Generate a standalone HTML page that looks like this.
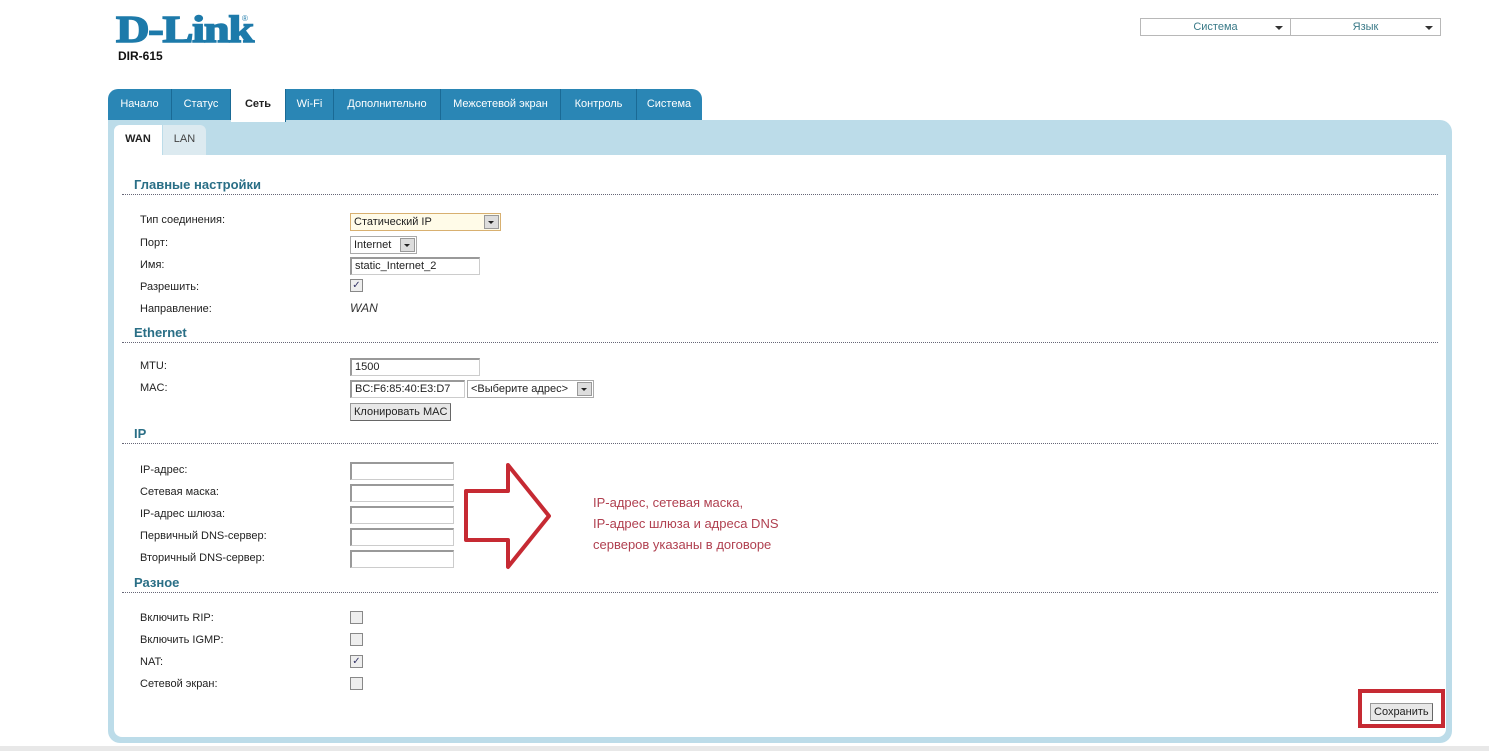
<!DOCTYPE html>
<html><head><meta charset="utf-8"><style>
body{margin:0;width:1489px;height:751px;background:#fff;position:relative;overflow:hidden;font-family:"Liberation Sans","DejaVu Sans",sans-serif;font-size:11px;color:#222}
.a{position:absolute}
.logo{left:116px;top:8px;font:bold 38px "Liberation Serif",serif;color:#1d7aaa;letter-spacing:-1px;transform:scaleX(1.22);transform-origin:0 0;-webkit-text-stroke:1.5px #1d7aaa}
.model{left:118px;top:49px;font:bold 12px "Liberation Sans",sans-serif;color:#111}
.dd{top:18px;height:16px;border:1px solid #b8b8b8;font-size:11px;color:#3a7a88;text-align:center;line-height:16px}
.dd:after{content:"";position:absolute;right:7px;top:7px;border:4px solid transparent;border-top:4px solid #333;border-bottom:0}
.tabs{left:108px;top:89px;height:31px;width:594px;background:#2a86b5;border-radius:10px 10px 0 0}
.tab{top:89px;height:31px;line-height:30px;color:#fff;font-size:11px;text-align:center;border-right:1px solid #1a6a95}
.panel{left:108px;top:120px;width:1344px;height:623px;background:#bcdce9;border-radius:0 12px 12px 12px}
.inner{left:114px;top:155px;width:1332px;height:582px;background:#fff;border-radius:0 0 8px 8px}
.st{top:125px;height:30px;line-height:28px;font-size:11px;text-align:center}
.h{left:134px;font:bold 13px "Liberation Sans",sans-serif;color:#2a6f86}
.line{left:122px;width:1316px;border-top:1px dotted #667}
.l{left:140px;font-size:11px;margin-top:2px}
.in{height:15px;border:1px solid #ccc;border-top:2px solid #999;border-left:2px solid #999;font-size:11px;line-height:15px;padding-left:3px;background:#fff}
.sel{height:16px;border:1px solid #aaa;font-size:11px;line-height:16px;padding-left:3px;background:#fff}
.sel b{position:absolute;right:1px;top:1px;width:13px;height:12px;background:#ddd;border:1px solid #999}
.sel b:after{content:"";position:absolute;left:3px;top:5px;border:3px solid transparent;border-top:3px solid #222;border-bottom:0}
.cb{width:11px;height:11px;border:1px solid #888;background:#eee;font-size:10px;line-height:11px;text-align:center;color:#336}
.btn{height:16px;border:1px solid #999;background:#e8e8e8;font-size:11px;line-height:16px;padding:0 3px;border-right-color:#666;border-bottom-color:#666}
</style></head><body>
<div class="a logo">D-Link</div>
<div class="a" style="left:242px;top:14px;font-size:8px;color:#1d7aaa">®</div>
<div class="a model">DIR-615</div>
<div class="a dd" style="left:1140px;width:149px">Система</div>
<div class="a dd" style="left:1290px;width:149px">Язык</div>

<div class="a panel"></div>
<div class="a tabs"></div>
<div class="a tab" style="left:108px;width:63px">Начало</div>
<div class="a tab" style="left:172px;width:58px">Статус</div>
<div class="a tab" style="left:231px;width:54px;background:#fff;color:#222;font-weight:bold;height:33px">Сеть</div>
<div class="a tab" style="left:286px;width:47px">Wi-Fi</div>
<div class="a tab" style="left:334px;width:106px">Дополнительно</div>
<div class="a tab" style="left:441px;width:119px">Межсетевой экран</div>
<div class="a tab" style="left:561px;width:75px">Контроль</div>
<div class="a tab" style="left:637px;width:64px;border:0">Система</div>
<div class="a inner"></div>
<div class="a st" style="left:114px;width:48px;background:#fff;font-weight:bold;border-radius:6px 0 0 0">WAN</div>
<div class="a st" style="left:163px;width:43px;background:#dceaf0;color:#444;border-radius:0 6px 0 0">LAN</div>

<div class="a h" style="top:177px">Главные настройки</div>
<div class="a line" style="top:194px"></div>
<div class="a l" style="top:212px">Тип соединения:</div>
<div class="a l" style="top:235px">Порт:</div>
<div class="a l" style="top:257px">Имя:</div>
<div class="a l" style="top:279px">Разрешить:</div>
<div class="a l" style="top:301px">Направление:</div>
<div class="a sel" style="left:350px;top:213px;width:146px;background:#fffbe8;border-color:#d8b070">Статический IP<b></b></div>
<div class="a sel" style="left:350px;top:236px;width:62px">Internet<b></b></div>
<div class="a in" style="left:350px;top:257px;width:124px">static_Internet_2</div>
<div class="a cb" style="left:350px;top:279px">✓</div>
<div class="a" style="left:350px;top:301px;font-style:italic;font-size:12px;color:#333">WAN</div>

<div class="a h" style="top:325px">Ethernet</div>
<div class="a line" style="top:342px"></div>
<div class="a l" style="top:358px">MTU:</div>
<div class="a l" style="top:380px">MAC:</div>
<div class="a in" style="left:350px;top:358px;width:124px">1500</div>
<div class="a in" style="left:350px;top:380px;width:109px">BC:F6:85:40:E3:D7</div>
<div class="a sel" style="left:467px;top:380px;width:122px">&lt;Выберите адрес&gt;<b></b></div>
<div class="a btn" style="left:350px;top:403px">Клонировать MAC</div>

<div class="a h" style="top:426px">IP</div>
<div class="a line" style="top:443px"></div>
<div class="a l" style="top:462px">IP-адрес:</div>
<div class="a l" style="top:484px">Сетевая маска:</div>
<div class="a l" style="top:506px">IP-адрес шлюза:</div>
<div class="a l" style="top:528px">Первичный DNS-сервер:</div>
<div class="a l" style="top:550px">Вторичный DNS-сервер:</div>
<div class="a in" style="left:350px;top:462px;width:98px"></div>
<div class="a in" style="left:350px;top:484px;width:98px"></div>
<div class="a in" style="left:350px;top:506px;width:98px"></div>
<div class="a in" style="left:350px;top:528px;width:98px"></div>
<div class="a in" style="left:350px;top:550px;width:98px"></div>
<svg class="a" style="left:0;top:0" width="1489" height="751"><polygon points="466,491 508,491 508,465 549,516 508,567 508,540 466,540" fill="none" stroke="#c62a33" stroke-width="4" stroke-linejoin="round"/>
<rect x="1360" y="691" width="83" height="35" fill="none" stroke="#c62a33" stroke-width="4"/></svg>
<div class="a" style="left:593px;top:492px;font-size:13px;line-height:21px;color:#b04050">IP-адрес, сетевая маска,<br>IP-адрес шлюза и адреса DNS<br>серверов указаны в договоре</div>

<div class="a h" style="top:575px">Разное</div>
<div class="a line" style="top:592px"></div>
<div class="a l" style="top:610px">Включить RIP:</div>
<div class="a l" style="top:632px">Включить IGMP:</div>
<div class="a l" style="top:654px">NAT:</div>
<div class="a l" style="top:676px">Сетевой экран:</div>
<div class="a cb" style="left:350px;top:611px"></div>
<div class="a cb" style="left:350px;top:633px"></div>
<div class="a cb" style="left:350px;top:655px">✓</div>
<div class="a cb" style="left:350px;top:677px"></div>
<div class="a btn" style="left:1370px;top:703px">Сохранить</div>
<div class="a" style="left:0;top:746px;width:1489px;height:5px;background:#e8e8e8"></div>
</body></html>
